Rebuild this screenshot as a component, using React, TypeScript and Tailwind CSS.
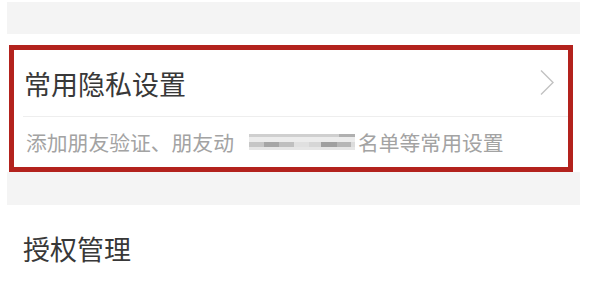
const font = { fontFamily: '"Noto Sans CJK SC", "Noto Sans", sans-serif' }

// 模糊处理的马赛克块（宽度, 颜色）
const blurTop = [
    ['w-[90px]', 'bg-[#cfcfcf]'],
    ['w-[16px]', 'bg-[#b0b0b0]'],
]
const blurBottom = [
    ['w-[15px]', 'bg-[#c6c6c6]'],
    ['w-[15px]', 'bg-[#a6a6a6]'],
    ['w-[15px]', 'bg-[#bfbfbf]'],
    ['w-[15px]', 'bg-[#e0e0e0]'],
    ['w-[12px]', 'bg-[#d6d6d6]'],
    ['w-[16px]', 'bg-[#a0a0a0]'],
    ['w-[14px]', 'bg-[#b6b6b6]'],
    ['w-[4px]', 'bg-[#dcdcdc]'],
]

function Blurred() {
    return (
        <span className="ml-[15px] mr-[3px] inline-flex w-[106px] flex-col">
            <span className="flex h-[3px]">
                {blurTop.map(([w, c], i) => (
                    <span key={i} className={`${w} ${c}`} />
                ))}
            </span>
            <span className="h-[5px] bg-[#ececec]" />
            <span className="flex h-[5px]">
                {blurBottom.map(([w, c], i) => (
                    <span key={i} className={`${w} ${c}`} />
                ))}
            </span>
            <span className="h-[3px] bg-[#e6e6e6]" />
        </span>
    )
}

function Chevron() {
    return (
        <svg width="16" height="27" viewBox="0 0 16 27" fill="none" className="mb-[2px] text-[#c2c2c2]">
            <path d="M2 1.5 L14 13.5 L2 25.5" stroke="currentColor" strokeWidth="1.4" />
        </svg>
    )
}

export default function App() {
    return (
        <div className="h-[284px] w-[600px] overflow-hidden bg-white" style={font}>
            <div className="ml-[7px] mt-[2px] h-[32px] w-[573px] bg-[#f4f4f4]" />

            {/* 常用隐私设置 */}
            <div className="ml-[7px] w-[573px] bg-white pt-[11px]">
                <div className="ml-[2px] w-[564px] border-[5px] border-[#b3221d]">
                    <div className="flex h-[66px] items-center justify-between pl-[10px] pr-[13px]">
                        <span className="text-[27px] leading-none text-[#383838]">常用隐私设置</span>
                        <Chevron />
                    </div>
                    <div className="ml-[9px] h-px bg-[#eeeeee]" />
                    <div className="flex h-[50px] items-center pl-[12px] text-[20.8px] leading-none text-[#a3a3a3]">
                        <span>添加朋友验证、朋友动</span>
                        <Blurred />
                        <span>名单等常用设置</span>
                    </div>
                </div>
            </div>

            <div className="ml-[7px] h-[33px] w-[573px] bg-[#f4f4f4]" />

            <div className="flex h-[86px] items-center pl-[23px]">
                <span className="text-[27px] leading-none text-[#383838]">授权管理</span>
            </div>
        </div>
    )
}
